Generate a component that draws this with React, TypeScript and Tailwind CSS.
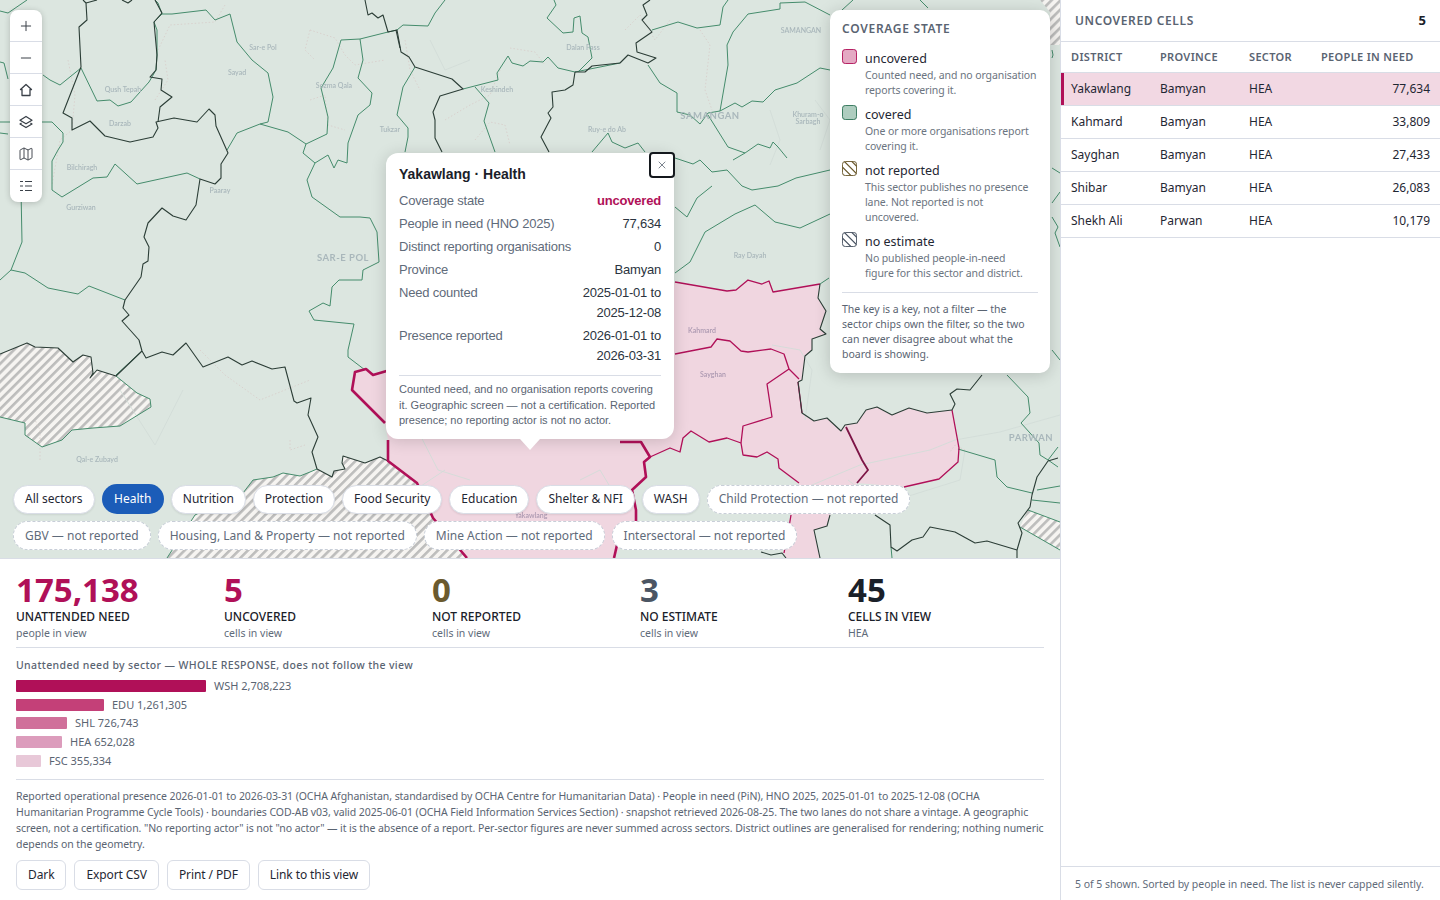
import React from 'react';
import { Plus, Minus, Map as MapIcon, X } from 'lucide-react';

const GREEN_LINES = [
  '0,11 8,13 27,0',
  '0,62 4,63 8,79',
  '0,133 8,134',
  '43,75 50,80 60,85 81,68',
  '81,68 97,101 110,100 118,106 131,102 149,82 156,70 157,55 157,30 154,22 162,14 158,3 155,0',
  '162,14 172,14 206,10 215,20 230,14 237,42 252,60 268,73 273,97 268,122 260,124 237,133 227,150',
  '260,124 288,132 306,144 303,153 315,163 307,180 312,197 340,217 360,217 370,218 377,232 379,262 363,270 362,280 339,280 332,287 330,306 323,303 309,311 314,320 354,324 348,350 348,357 365,370',
  '306,144 327,134 328,117 321,88 333,68 341,40 360,39 388,32 397,30',
  '360,39 363,60 358,78 372,93 370,105 358,115 348,143 347,163 338,160 334,168 328,155 315,163',
  '21,190 22,242 11,270 25,273 48,288 78,294 89,286 125,300',
  '11,270 0,280',
  '142,351 116,375',
  '43,122 52,122 63,133 63,142 58,150 52,161 52,190 62,197 93,178 107,177 115,164 137,184 187,173 200,179',
  '0,122 43,122',
  '397,30 403,25 428,26 435,13 445,0',
  '415,67 403,87 397,115 408,128 408,137 405,152',
  '463,89 498,80 497,73 508,56 512,63 523,66 530,61 543,62 548,57 558,68 575,72 620,63',
  '475,87 489,103 484,121 495,152',
  '578,72 592,58 588,37 582,33 580,16 574,18 573,32 563,33 547,18 556,5 554,0',
  '652,30 678,22 697,28 720,25 723,7 728,0',
  '648,65 660,83 677,93 677,112 690,115 700,124 708,113 720,111 728,65 727,45 733,32 748,14 780,9 780,3 805,2 830,15',
  '720,111 735,103 742,107 752,101 763,102 775,90 797,83 820,68 830,70',
  '708,115 728,147 745,153 758,144 770,148 773,142 778,147 787,158',
  '745,153 733,160',
  '592,152 608,133 612,142 625,148 638,143 645,152',
  '675,158 693,164 700,160 712,172 727,170 742,186 752,190 778,186 796,178 830,170',
  '675,207 687,217 697,198 712,186',
  '675,273 690,262 705,232 735,214 755,205 775,222 800,228 830,214',
  '820,284 829,278',
  '842,10 853,0',
  '920,0 928,8',
  '1052,50 1053,55 1052,58',
  '1052,168 1060,173',
  '1052,203 1060,192',
  '1052,217 1058,227 1055,233 1060,247',
  '1052,350 1060,360',
  '1007,375 1028,397 1030,413 1021,423 1039,443 1040,455 1048,460 1058,467',
  '958,449 995,460 997,477 1007,487 1032,493',
  '1037,490 1060,486',
  '1032,500 1060,503',
  '1058,447 1048,460',
  '891,547 892,558',
  '243,493 253,480 273,477 283,473 300,476 310,472 317,469',
  '116,376 137,393 150,399 151,407 120,426 93,428 72,430 62,440 42,447 25,435 25,423 0,417',
  '243,493 215,505 195,515 167,558',
  '1028,510 1060,522',
  '1020,527 1060,550',
];

const DARK_LINES = [
  '83,0 86,3 87,20 79,27 81,67 63,113 72,118 72,130 90,121 105,136 130,142 153,137 158,128 156,122 174,118 197,122 209,109 215,115 216,126 228,153 221,164 221,178 215,184 200,179 196,205 186,220 173,216 162,208 148,223 144,237 149,247 148,261 143,264 141,277 125,300 123,308 129,315 122,321 139,340 142,351 146,358 162,352 173,355 186,343 203,367 228,357 242,365 252,361 272,369 285,367 294,401 297,403 311,398 308,415 318,437 312,452 317,469 332,477 334,471 345,469 342,463 343,456 365,463 380,457 388,461',
  '86,3 97,0',
  '122,0 128,3 132,0',
  '155,0 162,13 154,22 157,55 156,70 150,77 162,79 161,90 172,97 160,107 158,122',
  '365,0 368,15 372,13 378,18 383,15 388,32 397,30 401,52 409,57 415,67 452,79 463,89 440,96 433,112 435,120 435,138 442,152',
  '396,30 400,48',
  '575,72 573,85 565,90 552,92 553,107 548,113 551,118 541,137 549,152',
  '575,72 585,72 592,66 620,63 628,55 648,63 656,58 637,52 636,43 652,32 642,20 647,15 643,5 650,0',
  '0,354 27,343 35,347 58,348 73,362 83,355 91,357 93,373 90,378 97,370 116,376 142,351',
  '798,382 802,413 814,421 827,418 841,431 845,425 857,423 866,410 877,407 892,415 909,408 927,413 952,410',
  '820,284 818,298 826,311 820,329 826,334 812,339 812,350 805,356 802,380 798,382',
  '952,410 955,404 950,394 957,389 970,390 982,375',
  '1058,458 1048,461 1037,477 1032,495 1030,507 1018,523 1022,533 1017,550 1017,558',
  '875,515 890,525 891,547 897,551 912,540 923,537 930,527 955,532 975,543 987,541 1017,550',
  '761,552 771,555 782,553 786,558',
  '830,515 827,526 814,530 820,558',
];

const MAGENTA_THIN = [
  '675,282 727,291 736,290 748,280 762,284 769,281 773,292 820,284',
  '675,354 711,347 717,339 730,341 741,351 748,352 771,349 784,354 789,369 799,379',
  '789,369 767,384 772,417 743,426 741,443 743,455 757,457 767,452 778,459 779,468 799,483',
  '798,382 802,413',
  '952,410 959,448 958,462 939,479 904,487',
  '791,515 789,527 784,553',
  '650,457 670,448 680,452 683,438 691,431 709,442 727,438 741,443',
];

const FAINT_DOTS = [
  '68,60 75,95 72,130 60,140 52,185',
  '155,100 168,80 165,60',
  '158,50 170,25 215,22 225,5',
  '310,30 335,38 345,55 355,65 385,60',
  '310,30 305,50 315,60',
  '310,100 325,95 328,125 345,130',
  '405,40 410,70 420,90',
  '445,120 470,105 490,95 500,70',
  '510,48 535,52 545,65',
  '625,30 640,15 655,40 670,20',
  '700,30 710,45 705,90 712,110',
  '475,140 490,122 505,125 510,145',
  '200,350 225,375 260,400 310,380',
  '290,440 290,450 305,445',
  '40,460 40,430 35,420',
  '965,450 955,445 950,452',
];

const FAINT_RIVERS = [
  '430,40 445,70 470,60',
  '770,110 780,140 770,165',
  '815,100 830,120 820,150',
  '120,390 155,445 183,390',
  '400,500 445,470',
  '388,395 415,425 438,470 470,480',
  '772,345 800,350 812,370 805,420',
  '800,490 860,465 930,450 955,440 1000,432 1060,415',
  '848,480 880,505 960,480 965,450',
  '580,480 600,470 615,495',
];

const LABELS: { text: string; x: number; y: number; big?: boolean; pink?: boolean }[] = [
  { text: 'Sar-e Pol', x: 263, y: 50 },
  { text: 'Sayad', x: 237, y: 75 },
  { text: 'Qush Tepah', x: 123, y: 92 },
  { text: 'Darzab', x: 120, y: 126 },
  { text: 'Bilchiragh', x: 82, y: 170 },
  { text: 'Gurziwan', x: 81, y: 210 },
  { text: 'Paaray', x: 220, y: 193 },
  { text: 'Sozma Qala', x: 334, y: 88 },
  { text: 'Tukzar', x: 390, y: 132 },
  { text: 'Keshindeh', x: 497, y: 92 },
  { text: 'Dalan Pass', x: 583, y: 50 },
  { text: 'Ruy-e do Ab', x: 607, y: 132 },
  { text: 'SAMANGAN', x: 801, y: 33 },
  { text: 'Khuram-o', x: 808, y: 117 },
  { text: 'Sarbagh', x: 808, y: 124 },
  { text: 'Ray Dayah', x: 750, y: 258 },
  { text: 'Qal-e Zubayd', x: 97, y: 462 },
  { text: 'Kahmard', x: 702, y: 333, pink: true },
  { text: 'Sayghan', x: 713, y: 377, pink: true },
  { text: 'Yakawlang', x: 531, y: 518, pink: true },
  { text: 'SAR-E POL', x: 343, y: 261, big: true },
  { text: 'SAMANGAN', x: 710, y: 119, big: true },
  { text: 'PARWAN', x: 1031, y: 441, big: true },
];

const TOOLS: React.ReactNode[] = [
  <Plus key="plus" size={16} strokeWidth={1.5} />,
  <Minus key="minus" size={16} strokeWidth={1.5} />,
  <svg key="home" width="16" height="16" viewBox="0 0 16 16" fill="none" stroke="currentColor" strokeWidth="1.3" strokeLinejoin="round">
    <path d="M2.500 7.500 8 2.500l5.500 5H12v6H4v-6z" />
  </svg>,
  <svg key="layers" width="16" height="16" viewBox="0 0 16 16" fill="none" stroke="currentColor" strokeWidth="1.3" strokeLinejoin="round">
    <path d="M8 2.500 14 6.200 8 9.800 2 6.200z" />
    <path d="M3.600 9 2 10 8 13.500 14 10 12.400 9" />
  </svg>,
  <MapIcon key="map" size={16} strokeWidth={1.4} />,
  <svg key="list" width="16" height="16" viewBox="0 0 16 16" fill="none" stroke="currentColor" strokeWidth="1.2">
    <path d="M2 3.500h3M7 3.500h7M2 8h3M7 8h7M2 12.500h3M7 12.500h7" />
  </svg>,
];

const SECTORS = ['All sectors', 'Health', 'Nutrition', 'Protection', 'Food Security', 'Education', 'Shelter & NFI', 'WASH'];
const NOT_REPORTED = ['Child Protection', 'GBV', 'Housing, Land & Property', 'Mine Action', 'Intersectoral'];

const STATS = [
  { value: '175,138', label: 'UNATTENDED NEED', sub: 'people in view', color: 'text-[#b01058]' },
  { value: '5', label: 'UNCOVERED', sub: 'cells in view', color: 'text-[#b01058]' },
  { value: '0', label: 'NOT REPORTED', sub: 'cells in view', color: 'text-[#6b5a2e]' },
  { value: '3', label: 'NO ESTIMATE', sub: 'cells in view', color: 'text-[#4b5563]' },
  { value: '45', label: 'CELLS IN VIEW', sub: 'HEA', color: 'text-[#1a2029]' },
];

const BARS = [
  { label: 'WSH 2,708,223', cls: 'w-[190px] bg-[#b01058]' },
  { label: 'EDU 1,261,305', cls: 'w-[88px] bg-[#c44078]' },
  { label: 'SHL 726,743', cls: 'w-[51px] bg-[#d0709a]' },
  { label: 'HEA 652,028', cls: 'w-[46px] bg-[#dc9cbc]' },
  { label: 'FSC 355,334', cls: 'w-[25px] bg-[#e8c8d8]' },
];

const ROWS = [
  ['Yakawlang', 'Bamyan', 'HEA', '77,634'],
  ['Kahmard', 'Bamyan', 'HEA', '33,809'],
  ['Sayghan', 'Bamyan', 'HEA', '27,433'],
  ['Shibar', 'Bamyan', 'HEA', '26,083'],
  ['Shekh Ali', 'Parwan', 'HEA', '10,179'],
];

const POPUP_ROWS: { k: string; v: React.ReactNode }[] = [
  { k: 'Coverage state', v: <b className="text-[#b01058]">uncovered</b> },
  { k: 'People in need (HNO 2025)', v: '77,634' },
  { k: 'Distinct reporting organisations', v: '0' },
  { k: 'Province', v: 'Bamyan' },
  { k: 'Need counted', v: <>2025-01-01 to<br />2025-12-08</> },
  { k: 'Presence reported', v: <>2026-01-01 to<br />2026-03-31</> },
];

const Swatch = ({ color, fill }: { color: string; fill?: string }) => (
  <svg width="15" height="15" viewBox="0 0 16 16" className="shrink-0">
    <defs>
      <clipPath id={`clip-${color.slice(1)}`}>
        <rect x="0.500" y="0.500" width="15" height="15" rx="3" />
      </clipPath>
    </defs>
    <rect x="0.500" y="0.500" width="15" height="15" rx="3" fill={fill || '#fff'} />
    {!fill && (
      <g clipPath={`url(#clip-${color.slice(1)})`} stroke={color} strokeWidth="1.300">
        <path d="M-4 2 14 20M1 -1 19 17M6 -4 24 14M-8 6 10 24" />
      </g>
    )}
    <rect x="0.500" y="0.500" width="15" height="15" rx="3" fill="none" stroke={color} />
  </svg>
);

// line ends are fixed here, the descriptions wrap the same way as the reference
const LEGEND = [
  { name: 'uncovered', text: 'Counted need, and no organisation\nreports covering it.', swatch: <Swatch color="#b01058" fill="#e4a9c3" /> },
  { name: 'covered', text: 'One or more organisations report\ncovering it.', swatch: <Swatch color="#2f7358" fill="#aecdbf" /> },
  { name: 'not reported', text: 'This sector publishes no presence\nlane. Not reported is not\nuncovered.', swatch: <Swatch color="#6b5a2e" /> },
  { name: 'no estimate', text: 'No published people-in-need\nfigure for this sector and district.', swatch: <Swatch color="#4b5563" /> },
];

const MapDrawing = () => (
  <svg className="block h-full w-full" viewBox="0 0 1060 558">
    <defs>
      <pattern id="hatch" width="6.400" height="6.400" patternUnits="userSpaceOnUse" patternTransform="rotate(-45)">
        <rect width="6.400" height="6.400" fill="#f6f4f1" />
        <rect width="6.400" height="2.600" fill="#bdbdbc" />
      </pattern>
    </defs>
    <rect width="1060" height="558" fill="#dce6e0" />
    <polygon
      fill="url(#hatch)"
      points="0,354 27,343 35,347 58,348 73,362 83,355 91,357 93,373 90,378 97,370 116,376 137,393 150,399 151,407 120,426 93,428 72,430 62,440 42,447 25,435 25,423 0,417"
    />
    <polygon
      fill="url(#hatch)"
      points="243,493 253,480 273,477 283,473 300,476 317,469 332,477 334,471 345,469 342,463 343,456 365,463 380,457 388,461 417,483 433,518 467,558 167,558 195,515"
    />
    <polygon fill="url(#hatch)" points="1040,0 1060,0 1060,45 1050,45 1050,12" />
    <polygon fill="url(#hatch)" points="1028,510 1060,522 1060,550 1020,527" />
    <polygon
      fill="#f0d6e0"
      points="352,390 355,372 366,369 373,375 620,300 691,431 683,438 680,452 670,448 652,457 644,462 646,477 632,490 636,520 614,558 467,558 433,518 417,483 388,461 388,440 385,423"
    />
    <polygon
      fill="#f0d6e0"
      points="670,282 727,291 736,290 748,280 762,284 769,281 773,292 820,284 818,298 826,311 820,329 826,334 812,339 812,350 805,356 802,380 798,382 802,413 814,421 827,418 841,431 845,425 857,423 866,410 877,407 892,415 909,408 927,413 952,410 959,448 958,462 939,479 904,487 857,483 830,515 827,526 814,530 820,558 786,558 784,553 789,527 791,515 799,483 779,468 778,459 767,452 757,457 743,455 741,443 727,438 709,442 691,431 670,431"
    />
    <g fill="none" stroke="#d3dcd8" strokeWidth="0.900">
      {FAINT_RIVERS.map((p) => (
        <polyline key={p} points={p} />
      ))}
    </g>
    <g fill="none" stroke="#d8cfcc" strokeWidth="0.900" strokeDasharray="1.500 2">
      {FAINT_DOTS.map((p) => (
        <polyline key={p} points={p} />
      ))}
    </g>
    <g fill="none" stroke="#458c6c" strokeWidth="1" strokeLinejoin="round">
      {GREEN_LINES.map((p) => (
        <polyline key={p} points={p} />
      ))}
    </g>
    <g fill="none" stroke="#b01058" strokeWidth="1.300" strokeLinejoin="round">
      {MAGENTA_THIN.map((p) => (
        <polyline key={p} points={p} />
      ))}
    </g>
    <g fill="none" stroke="#2b3d36" strokeWidth="1.100" strokeLinejoin="round">
      {DARK_LINES.map((p) => (
        <polyline key={p} points={p} />
      ))}
    </g>
    <polyline fill="none" stroke="#7d1546" strokeWidth="1.800" points="846,427 862,460 868,470 857,483" />
    <g fill="none" stroke="#b01058" strokeWidth="2.600" strokeLinejoin="round">
      <polyline points="385,423 352,390 355,372 366,369 373,375 390,370" />
      <polyline points="388,440 388,461 417,483 433,518 467,558" />
      <polyline points="620,442 641,442 650,457 644,462 646,477 632,490 636,510 636,525" />
      <polyline points="617,545 614,558" />
    </g>
    <g className="blur-[0.4px]" textAnchor="middle" fontFamily="Lato, sans-serif">
      {LABELS.map((l) => (
        <text
          key={l.text + l.x}
          x={l.x}
          y={l.y}
          fill={l.pink ? '#ab98b0' : '#a9b7bb'}
          fontSize={l.big ? 9.500 : 7}
          fontWeight={l.big ? 700 : 600}
          letterSpacing={l.big ? 0.5 : 0}
        >
          {l.text}
        </text>
      ))}
    </g>
  </svg>
);

const MapPopup = () => (
  <div className="absolute left-[386px] top-[153px] w-[288px] rounded-xl bg-white px-[13px] pb-[10px] pt-[11px] font-['Liberation_Sans',sans-serif] text-[13px] leading-5 tracking-[-0.2px] text-[#2b3440] shadow-[0_2px_16px_rgba(0,0,0,0.16)]">
    <button className="absolute right-[-1px] top-[-1px] flex h-[26px] w-[26px] items-center justify-center rounded-[4px] border-2 border-[#14181d] bg-white text-[#5a6472]">
      <X size={12} strokeWidth={1.6} />
    </button>
    <div className="text-[14px] font-bold tracking-normal text-[#1a2029]">Yakawlang · Health</div>
    <div className="mt-[7px] flex flex-col gap-[3px]">
      {POPUP_ROWS.map((r) => (
        <div key={r.k} className="flex justify-between">
          <span className="text-[#5f6b7a]">{r.k}</span>
          <span className="text-right">{r.v}</span>
        </div>
      ))}
    </div>
    <div className="mt-[9px] border-t border-[#d9dde6] pt-[6px] text-[11px] leading-[15.500px] tracking-normal text-[#5a6472]">
      Counted need, and no organisation reports covering it. Geographic screen — not a certification. Reported
      presence; no reporting actor is not no actor.
    </div>
    <div className="absolute left-[134px] top-[100%] h-0 w-0 border-x-[10px] border-t-[11px] border-x-transparent border-t-white" />
  </div>
);

const Legend = () => (
  <div className="absolute left-[830px] top-[10px] w-[220px] rounded-[10px] bg-white px-3 py-[11px] shadow-[0_2px_16px_rgba(0,0,0,0.18)]">
    <div className="text-[12px] font-semibold leading-[16px] tracking-[0.06em] text-[#5a6472]">COVERAGE STATE</div>
    <div className="mt-[13px] flex flex-col gap-2">
      {LEGEND.map((l) => (
        <div key={l.name} className="flex gap-2">
          <div className="-mt-[1px]">{l.swatch}</div>
          <div>
            <div className="text-[12.500px] leading-[18px] text-[#1f2733]">{l.name}</div>
            <div className="whitespace-pre text-[10.500px] leading-[15px] tracking-[-0.1px] text-[#6b7480]">{l.text}</div>
          </div>
        </div>
      ))}
    </div>
    <div className="mt-[11px] border-t border-[#d9dde6] pt-[9px] text-[10.500px] leading-[15px] text-[#5a6472]">
      The key is a key, not a filter — the sector chips own the filter, so the two can never disagree about what the
      board is showing.
    </div>
  </div>
);

const Chips = () => (
  <div className="absolute bottom-[8px] left-[13px] flex w-[1000px] flex-wrap items-center gap-[7px]">
    {SECTORS.map((s) => (
      <button
        key={s}
        className={
          s === 'Health'
            ? 'h-[30px] rounded-full bg-[#1b5cb8] px-[12.500px] text-[12px] text-white'
            : 'h-[29px] rounded-full border border-[#d9dde6] bg-white px-[11px] text-[12px] text-[#1f2733] shadow-[0_1px_2px_rgba(0,0,0,0.08)]'
        }
      >
        {s}
      </button>
    ))}
    {NOT_REPORTED.map((s) => (
      <button
        key={s}
        className="h-[29px] rounded-full border border-dashed border-[#c8ced8] bg-white px-[11px] text-[12px] text-[#5f6b7a]"
      >
        {s} — not reported
      </button>
    ))}
  </div>
);

export default function App() {
  return (
    <div className="flex h-[900px] w-[1440px] overflow-hidden bg-white font-['Noto_Sans',sans-serif] text-[#1f2733]">
      <div className="flex w-[1060px] shrink-0 flex-col">
        <div className="relative h-[559px] shrink-0 overflow-hidden border-b border-[#d9dde6]">
          <MapDrawing />
          <div className="absolute left-[10px] top-[10px] flex w-[32px] flex-col overflow-hidden rounded-lg bg-white text-[#3a4048] shadow-[0_1px_6px_rgba(0,0,0,0.2)]">
            {TOOLS.map((icon, i) => (
              <button key={i} className="flex h-[32px] items-center justify-center border-b border-[#d9dde6] last:border-b-0">
                {icon}
              </button>
            ))}
          </div>
          <MapPopup />
          <Legend />
          <Chips />
        </div>

        <div className="flex-1 px-4 pt-[12px]">
          <div className="flex border-b border-[#d9dde6] pb-[6px]">
            {STATS.map((s) => (
              <div key={s.label} className="w-[208px] shrink-0">
                <div className={`text-[33px] font-bold leading-[38px] ${s.color}`}>{s.value}</div>
                <div className="text-[12px] font-medium leading-[16px] text-[#1a2029]">{s.label}</div>
                <div className="text-[10.500px] leading-[16px] text-[#5f6b7a]">{s.sub}</div>
              </div>
            ))}
          </div>

          <div className="mt-[10px] border-b border-[#d9dde6] pb-[12px]">
            <div className="text-[10.500px] font-medium leading-[15px] tracking-[0.36px] text-[#5a6472]">
              Unattended need by sector — WHOLE RESPONSE, does not follow the view
            </div>
            <div className="mt-[7px] flex flex-col gap-[6.700px]">
              {BARS.map((b) => (
                <div key={b.label} className="flex h-[12px] items-center gap-2">
                  <div className={`h-[12px] rounded-[1px] ${b.cls}`} />
                  <span className="text-[11px] leading-[12px] text-[#5a6472]">{b.label}</span>
                </div>
              ))}
            </div>
          </div>

          <p className="mt-[8px] text-[10.500px] leading-[16px] tracking-[-0.07px] text-[#5a6472]">
            Reported operational presence 2026-01-01 to 2026-03-31 (OCHA Afghanistan, standardised by OCHA Centre for
            Humanitarian Data) · People in need (PiN), HNO 2025, 2025-01-01 to 2025-12-08 (OCHA
            <br />
            Humanitarian Programme Cycle Tools) · boundaries COD-AB v03, valid 2025-06-01 (OCHA Field Information
            Services Section) · snapshot retrieved 2026-08-25. The two lanes do not share a vintage. A geographic
            <br />
            screen, not a certification. "No reporting actor" is not "no actor" — it is the absence of a report.
            Per-sector figures are never summed across sectors. District outlines are generalised for rendering; nothing
            numeric depends on the geometry.
          </p>

          <div className="mt-[8px] flex gap-2">
            {['Dark', 'Export CSV', 'Print / PDF', 'Link to this view'].map((b) => (
              <button key={b} className="h-[30px] rounded-md border border-[#d9dde6] bg-white px-[11px] text-[12px] tracking-[-0.1px] text-[#1f2733]">
                {b}
              </button>
            ))}
          </div>
        </div>
      </div>

      <aside className="flex w-[380px] shrink-0 flex-col border-l border-[#d9dde6]">
        <div className="flex h-[42px] shrink-0 items-center justify-between border-b border-[#d9dde6] pl-[14px] pr-[14px]">
          <span className="text-[12px] font-semibold tracking-[0.05em] text-[#5a6472]">UNCOVERED CELLS</span>
          <span className="text-[13px] font-bold text-[#1a2029]">5</span>
        </div>
        <table className="w-full table-fixed border-collapse text-[12px]">
          <thead>
            <tr className="h-[30px] border-b border-[#d9dde6] text-left text-[11px] tracking-[0.03em] text-[#5a6472]">
              <th className="w-[89px] pl-[10px] font-semibold">DISTRICT</th>
              <th className="w-[89px] pl-[10px] font-semibold">PROVINCE</th>
              <th className="w-[72px] pl-[10px] font-semibold">SECTOR</th>
              <th className="pl-[10px] font-semibold">PEOPLE IN NEED</th>
            </tr>
          </thead>
          <tbody>
            {ROWS.map((r, i) => (
              <tr
                key={r[0]}
                className={`h-[33px] border-b border-[#d9dde6] ${i === 0 ? 'bg-[#f2d8e3] shadow-[inset_3px_0_0_#b01058]' : ''}`}
              >
                <td className="pl-[10px] pt-[1px]">{r[0]}</td>
                <td className="pl-[10px] pt-[1px]">{r[1]}</td>
                <td className="pl-[10px] pt-[1px]">{r[2]}</td>
                <td className="pr-[10px] pt-[1px] text-right">{r[3]}</td>
              </tr>
            ))}
          </tbody>
        </table>
        <div className="mt-auto border-t border-[#d9dde6] pb-[7px] pl-[14px] pt-[9px] text-[10.500px] leading-[17px] tracking-[-0.04px] text-[#5f6b7a]">
          5 of 5 shown. Sorted by people in need. The list is never capped silently.
        </div>
      </aside>
    </div>
  );
}
